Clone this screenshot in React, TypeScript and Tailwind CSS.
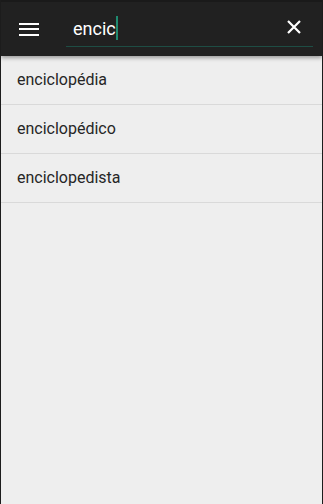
import React from "react";

const words = ["enciclopédia", "enciclopédico", "enciclopedista"];

const App = () => {
  return (
    <div
      className="w-[323px] h-[504px] bg-[#eeeeee] border-x border-[#1c1c1c] flex flex-col overflow-hidden"
      style={{ fontFamily: "Roboto, 'Noto Sans', sans-serif" }}
    >
      <div className="h-[56px] shrink-0 bg-[#212121] border-t-2 border-[#1a1a1a] flex items-center shadow-[0_2px_4px_rgba(0,0,0,0.35)] relative z-10">
        <div className="w-[65px] pl-[18px]">
          <div className="flex flex-col gap-[3.5px]">
            <div className="w-[20px] h-[2px] bg-white" />
            <div className="w-[20px] h-[2px] bg-white" />
            <div className="w-[20px] h-[2px] bg-white" />
          </div>
        </div>
        <div className="flex-1 mr-[9px] h-[36px] border-b border-[#1e4d44] flex items-center pl-[7px] pr-[12px]">
          <span className="text-white text-[18px] leading-none">encic</span>
          <span className="w-[2px] h-[24px] bg-[#1f8a70] ml-[0.5px] mt-[-2px]" />
          <div className="flex-1" />
          <svg width="14" height="14" viewBox="0 0 14 14" className="mt-[-3px]">
            <path d="M1 1L13 13M13 1L1 13" stroke="white" strokeWidth="2.2" />
          </svg>
        </div>
      </div>
      <div className="flex flex-col">
        {words.map((w) => (
          <div
            key={w}
            className="h-[49px] border-b border-[#d9d9d9] flex items-center pl-[16px] text-[16px] text-[#262626]"
          >
            {w}
          </div>
        ))}
      </div>
    </div>
  );
};

export default App;
